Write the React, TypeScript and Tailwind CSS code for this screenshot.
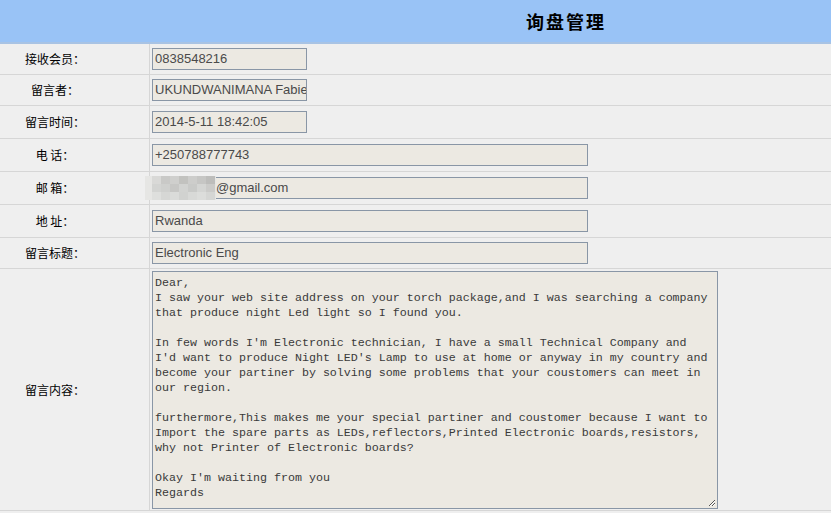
import React from 'react';

const cjk = { fontFamily: '"Noto Sans CJK SC", "Liberation Sans", sans-serif' };

const message = [
  'Dear,',
  'I saw your web site address on your torch package,and I was searching a company',
  'that produce night Led light so I found you.',
  '',
  "In few words I'm Electronic technician, I have a small Technical Company and",
  "I'd want to produce Night LED's Lamp to use at home or anyway in my country and",
  'become your partiner by solving some problems that your coustomers can meet in',
  'our region.',
  '',
  'furthermore,This makes me your special partiner and coustomer because I want to',
  'Import the spare parts as LEDs,reflectors,Printed Electronic boards,resistors,',
  'why not Printer of Electronic boards?',
  '',
  "Okay I'm waiting from you",
  'Regards',
];

// mosaic blocks over the e-mail address
const mosaic = [
  ['#d9d9d7', '#c9c9c7', '#cfcfcd', '#c2c2bf', '#cdcdcb', '#c6c6c4', '#bdbdbb'],
  ['#d3d4d2', '#cfd0ce', '#c7c7c5', '#d2d3d1', '#c9cac8', '#d4d5d3', '#cbcbc9'],
  ['#dedfdd', '#d6d7d5', '#dadbd9', '#d1d2d0', '#d8d9d7', '#dcdddb', '#d5d6d4'],
];

function Row({ label, height, children }: { label: string; height: string; children: React.ReactNode }) {
  return (
    <div className={`flex border-b border-[#d6d6d6] ${height}`}>
      <div className="w-[150px] shrink-0 border-r border-[#d6d6d6] flex items-center">
        <span className="w-[110px] text-center text-[12px] text-black" style={cjk}>
          {label}
        </span>
      </div>
      <div className="flex-1 flex items-center pl-[2px]">{children}</div>
    </div>
  );
}

function Field({ value, wide, indent }: { value: string; wide?: boolean; indent?: string }) {
  return (
    <div
      className={`${wide ? 'w-[436px]' : 'w-[155px]'} h-[22px] border border-[#8996a6] bg-[#ece9e2] ${indent ?? 'pl-[2px]'} flex items-center overflow-hidden whitespace-nowrap text-[13px] text-[#4a4a4a]`}
      style={{ fontFamily: '"Liberation Sans", Arial, sans-serif' }}
    >
      {value}
    </div>
  );
}

export default function App() {
  return (
    <div className="w-[831px] h-[513px] bg-[#efefef] overflow-hidden">
      {/* header */}
      <div className="h-[44px] bg-[#99c3f6] border-b-2 border-[#a8c3e4] flex items-center pl-[526px]">
        <span className="text-[18px] font-bold tracking-[2px] text-black" style={cjk}>
          询盘管理
        </span>
      </div>

      <Row label="接收会员：" height="h-[31px]">
        <Field value="0838548216" />
      </Row>
      <Row label="留言者：" height="h-[31px]">
        <Field value="UKUNDWANIMANA Fabien" />
      </Row>
      <Row label="留言时间：" height="h-[33px]">
        <Field value="2014-5-11 18:42:05" />
      </Row>
      <Row label="电 话：" height="h-[33px]">
        <Field value="+250788777743" wide />
      </Row>
      <Row label="邮 箱：" height="h-[33px]">
        <div className="relative">
          <Field value="@gmail.com" wide indent="pl-[63px]" />
          <div className="absolute left-[-7px] top-[-1px] w-[71px] h-[24px] bg-[#e6e6e4] flex flex-col pl-[7px]">
            {mosaic.map((r, i) => (
              <div key={i} className="flex h-[8px]">
                {r.map((c, j) => (
                  <div key={j} className="w-[9px] h-[8px]" style={{ backgroundColor: c }} />
                ))}
              </div>
            ))}
          </div>
        </div>
      </Row>
      <Row label="地 址：" height="h-[33px]">
        <Field value="Rwanda" wide />
      </Row>
      <Row label="留言标题：" height="h-[31px]">
        <Field value="Electronic Eng" wide />
      </Row>
      <Row label="留言内容：" height="h-[242px]">
        <div
          className="relative w-[566px] h-[238px] border border-[#8996a6] bg-[#ece9e2] pl-[2px] pt-[4px] overflow-hidden text-[11.67px] leading-[15px] text-[#3a3a3a] whitespace-pre"
          style={{ fontFamily: '"Liberation Mono", "Courier New", monospace' }}
        >
          {message.map((l, i) => (
            <div key={i} className="h-[15px]">
              {l}
            </div>
          ))}
          <svg className="absolute right-[1px] bottom-[1px]" width="10" height="10" viewBox="0 0 10 10">
            <path d="M9 3 L3 9 M9 6 L6 9" stroke="#555" strokeWidth="1" fill="none" />
            <path d="M9 4 L4 9 M9 7 L7 9" stroke="#fff" strokeWidth="1" fill="none" />
          </svg>
        </div>
      </Row>
    </div>
  );
}
